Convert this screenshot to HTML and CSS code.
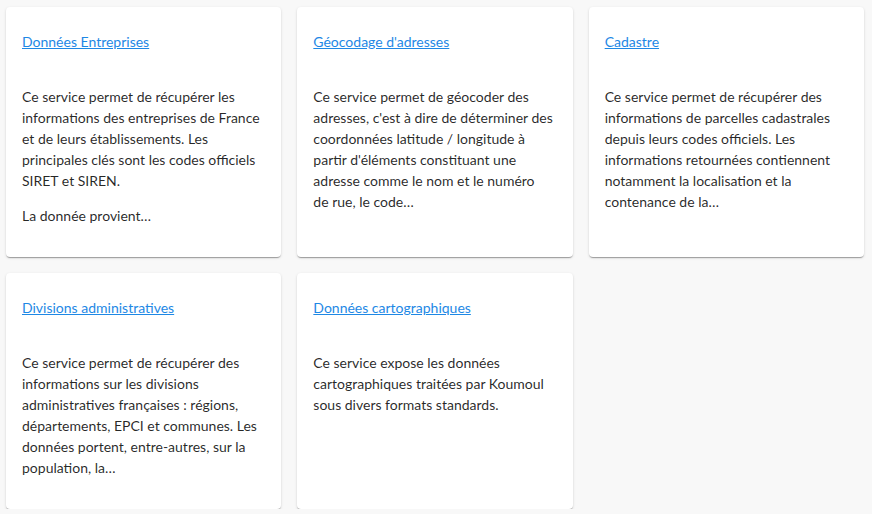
FILE: index.html
```html
<!DOCTYPE html>
<html lang="fr">
<head>
<meta charset="utf-8">
<link rel="stylesheet" href="styles.css">
</head>
<body>
<main class="grid">
  <article class="card">
    <h2 class="card-title"><a href="#">Données Entreprises</a></h2>
    <div class="card-text">
      <p>Ce service permet de récupérer les informations des entreprises de France et de leurs établissements. Les principales clés sont les codes officiels SIRET et SIREN.</p>
      <p>La donnée provient…</p>
    </div>
  </article>
  <article class="card">
    <h2 class="card-title"><a href="#">Géocodage d'adresses</a></h2>
    <div class="card-text">
      <p>Ce service permet de géocoder des adresses, c'est à dire de déterminer des coordonnées latitude / longitude à partir d'éléments constituant une adresse comme le nom et le numéro de&nbsp;rue, le code…</p>
    </div>
  </article>
  <article class="card">
    <h2 class="card-title"><a href="#">Cadastre</a></h2>
    <div class="card-text">
      <p>Ce service permet de récupérer des informations de parcelles cadastrales depuis leurs codes officiels. Les informations retournées contiennent notamment la localisation et la contenance de la…</p>
    </div>
  </article>
  <article class="card">
    <h2 class="card-title"><a href="#">Divisions administratives</a></h2>
    <div class="card-text">
      <p>Ce service permet de récupérer des informations sur les divisions administratives françaises : régions, départements, EPCI et communes. Les données portent, entre-autres, sur la population, la…</p>
    </div>
  </article>
  <article class="card">
    <h2 class="card-title"><a href="#">Données cartographiques</a></h2>
    <div class="card-text">
      <p>Ce service expose les données cartographiques traitées par Koumoul sous divers formats standards.</p>
    </div>
  </article>
</main>
</body>
</html>
```
FILE: styles.css
```css
html, body {
  margin: 0;
  padding: 0;
  background: #f8f8f8;
}
body {
  font-family: Lato, "Noto Sans", sans-serif;
  font-size: 14px;
  color: rgba(0, 0, 0, 0.85);
}
.grid {
  display: grid;
  grid-template-columns: repeat(3, 1fr);
  gap: 16px;
  padding: 7px 8px 0 6px;
}
.card {
  background: #fff;
  border-radius: 4px;
  box-shadow: 0 2px 1px -1px rgba(0,0,0,.2), 0 1px 1px 0 rgba(0,0,0,.14), 0 1px 3px 0 rgba(0,0,0,.12);
  padding: 25px 16px 31px;
}
.card-title {
  margin: 0 0 34px;
  font-size: 14px;
  font-weight: 400;
  line-height: 20px;
}
.card-title a {
  color: #1e88e5;
}
.card-text p {
  margin: 0 0 14px;
  line-height: 21px;
}
.card-text p:last-child {
  margin-bottom: 0;
}
```
